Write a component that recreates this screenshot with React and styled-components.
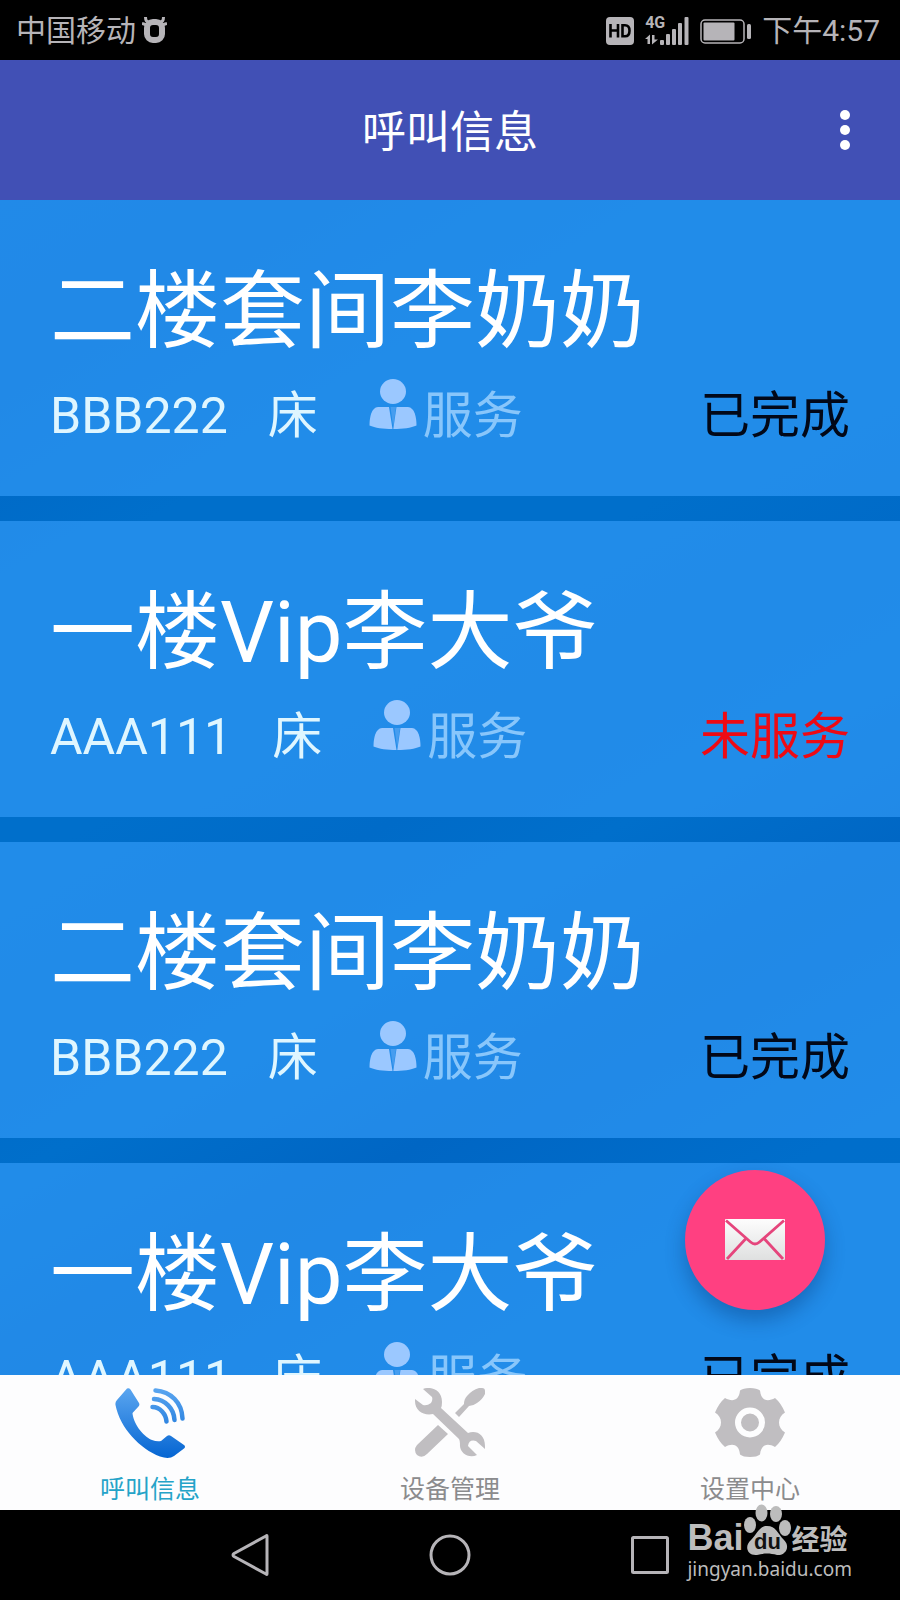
import React from 'react';
import styled, {createGlobalStyle} from 'styled-components';

const GlobalStyle = createGlobalStyle`
  * {
    box-sizing: border-box;
  }

  body {
    margin: 0;
    background: #000;
    font-family: Roboto, 'Noto Sans CJK SC', sans-serif;
  }

  button {
    padding: 0;
    border: 0;
    background: none;
    font-family: inherit;
    cursor: pointer;
  }

  svg {
    display: block;
  }
`;

const Screen = styled.div`
  position: relative;
  display: flex;
  flex-direction: column;
  height: 100vh;
  min-height: 600px;
`;

const StatusBar = styled.div`
  display: flex;
  flex: none;
  align-items: center;
  height: 60px;
  padding: 2px 20px 0 16px;
  background: #000;
  color: #b6b4b8;
  font-size: 30px;
  line-height: 36px;
`;

const Carrier = styled.span`
  margin-right: 6px;
`;

const StatusIcons = styled.div`
  display: flex;
  align-items: center;
  gap: 11px;
  margin-left: auto;
`;

const Header = styled.header`
  position: relative;
  display: flex;
  flex: none;
  align-items: center;
  justify-content: center;
  height: 140px;
  background: #4150b5;
`;

const HeaderTitle = styled.h1`
  margin: 0;
  padding-top: 6px;
  color: #fff;
  font-size: 44px;
  font-weight: 400;
  line-height: 60px;
`;

const MenuButton = styled.button`
  position: absolute;
  top: 0;
  right: 0;
  display: flex;
  flex-direction: column;
  align-items: center;
  justify-content: center;
  gap: 5px;
  width: 110px;
  height: 100%;
`;

const Dot = styled.span`
  width: 10px;
  height: 10px;
  border-radius: 50%;
  background: #fff;
`;

const Main = styled.main`
  position: relative;
  flex: 1;
  min-height: 0;
`;

const List = styled.ul`
  display: flex;
  flex-direction: column;
  gap: 25px;
  height: 100%;
  margin: 0;
  padding: 0;
  overflow-y: auto;
  scrollbar-width: none;
  list-style: none;
  background: linear-gradient(150deg, #0069c8 0%, #0067c5 10%, #006fcb 24%, #006fcb 40%, #006bc8 50%, #006fcb 58%, #0066c4 70%, #006ecb 84%, #006fcb 100%);
`;

const Card = styled.li`
  flex: none;
  height: 296px;
  padding: 57px 50px 0;
  background: rgba(55, 160, 253, .6);
`;

const Name = styled.h2`
  margin: 0;
  color: #fff;
  font-size: 85px;
  font-weight: 400;
  line-height: 110px;
  white-space: nowrap;
`;

const Details = styled.div`
  display: flex;
  align-items: center;
  height: 98px;
  color: #dff6ff;
  font-size: 50px;
  line-height: 60px;
  white-space: nowrap;
`;

const Bed = styled.span`
  margin-left: 40px;
`;

const Service = styled.span`
  display: flex;
  align-items: center;
  gap: 6px;
  margin-left: 51px;
  color: #88c6fb;

  svg {
    margin-bottom: 24px;
  }
`;

const Status = styled.span`
  margin-left: auto;
  color: ${({$done}) => $done ? '#020818' : '#ee0a14'};
`;

const Fab = styled.button`
  position: absolute;
  right: 75px;
  bottom: 65px;
  display: flex;
  align-items: center;
  justify-content: center;
  width: 140px;
  height: 140px;
  border-radius: 50%;
  background: #ff4081;
  box-shadow: 0 10px 20px rgba(0, 30, 80, .3);
`;

const TabBar = styled.nav`
  display: flex;
  flex: none;
  height: 135px;
  background: #fdfdfe;
`;

const Tab = styled.button`
  display: flex;
  flex: 1;
  flex-direction: column;
  align-items: center;
  gap: 14px;
  padding-top: 13px;
  color: ${({$active}) => $active ? '#24a3c8' : '#8b8b8d'};
  font-size: 25px;
  line-height: 36px;
`;

const NavBar = styled.nav`
  position: relative;
  display: flex;
  flex: none;
  justify-content: center;
  height: 90px;
  padding: 0 calc(100% / 6);
  background: #000;
`;

const NavButton = styled.button`
  display: flex;
  flex: 1;
  align-items: center;
  justify-content: center;
`;

const Watermark = styled.div`
  position: absolute;
  right: 48px;
  bottom: 18px;
  color: #bcbcbc;
`;

const Brand = styled.div`
  display: flex;
  align-items: flex-end;
  height: 54px;
  font-family: 'Liberation Sans', 'Noto Sans CJK SC', sans-serif;
  font-size: 36px;
  font-weight: 700;
  line-height: 36px;
`;

const Paw = styled.span`
  position: relative;
  width: 48px;
  height: 54px;
`;

const PawText = styled.span`
  position: absolute;
  bottom: 3px;
  left: 0;
  width: 100%;
  color: #111;
  font-size: 22px;
  line-height: 22px;
  text-align: center;
`;

const BrandSuffix = styled.span`
  font-size: 28px;
  line-height: 30px;
`;

const BrandUrl = styled.div`
  font-family: 'Noto Sans', sans-serif;
  font-size: 19px;
  line-height: 26px;
`;

const BullIcon = () => (
  <svg width="25" height="28" viewBox="0 0 25 28" fill="none" stroke="#b6b4b8">
    <path d="M3.500 0C3.500 3 4 5 7 5M21.500 0C21.500 3 21 5 18 5M0 6.500L5 8M25 6.500L20 8" strokeWidth="3" />
    <rect x="5" y="5" width="15" height="18" rx="6" strokeWidth="6" />
  </svg>
);

const HdIcon = () => (
  <svg width="28" height="28" viewBox="0 0 28 28">
    <rect width="28" height="28" rx="4" fill="#b6b4b8" />
    <path d="M4.500 7V20.500M12 7V20.500M4.500 13.500H12M16.500 8.300V19.200H19C22 19.200 23.500 17 23.500 13.700S22 8.300 19 8.300Z" fill="none" stroke="#000" strokeWidth="2.600" />
  </svg>
);

const SignalText = styled.span`
  position: absolute;
  top: 0;
  left: 0;
  font-family: 'Liberation Sans Narrow', Roboto, sans-serif;
  font-size: 16px;
  font-weight: 700;
  line-height: 12px;
`;

const Signal = styled.span`
  position: relative;
`;

const SignalIcon = () => (
  <Signal>
    <SignalText>4G</SignalText>
    <svg width="44" height="28" viewBox="0 0 44 28" fill="#b6b4b8">
      <path d="M0 22L5 17.500V27H2.500V22ZM7 18H9.500V22.500H13L7 27.500Z" />
      <rect x="15" y="23" width="4" height="5" rx="1" />
      <rect x="21" y="17" width="4" height="11" rx="1" />
      <rect x="27" y="12" width="4" height="16" rx="1" />
      <rect x="33" y="6" width="4" height="22" rx="1" />
      <rect x="39.500" y="0" width="4" height="28" rx="1" />
    </svg>
  </Signal>
);

const BatteryIcon = () => (
  <svg width="51" height="25" viewBox="0 0 51 25">
    <rect x="1" y="1" width="43" height="23" rx="4" fill="none" stroke="#b6b4b8" strokeWidth="1.500" />
    <rect x="3.500" y="3.500" width="31" height="18" rx="1" fill="#b6b4b8" />
    <rect x="47" y="5" width="4" height="15" rx="1.500" fill="#b6b4b8" />
  </svg>
);

const PersonIcon = () => (
  <svg width="48" height="51" viewBox="0 0 48 51" fill="#9bc8ff">
    <ellipse cx="24" cy="12.500" rx="13" ry="12.500" />
    <path d="M9 28H20L23.500 50C14 50 6 49 .5 46.500C.5 38 2.500 28.500 9 28Z" />
    <path d="M39 28H27.500L24.300 50C34 50 42 49 47.500 46.500C47.500 38 45.500 28.500 39 28Z" />
    <path d="M21.500 28H27L24.200 48Z" opacity=".3" />
  </svg>
);

const MailIcon = () => (
  <svg width="60" height="42" viewBox="0 0 60 42">
    <defs>
      <linearGradient id="paper" x1="0" y1="0" x2="0" y2="1">
        <stop offset="0" stopColor="#fdfdfd" />
        <stop offset="1" stopColor="#dfe0e0" />
      </linearGradient>
    </defs>
    <rect width="60" height="41" rx="1" fill="url(#paper)" />
    <path d="M1 1.500L25.500 23Q30 27 34.500 23L59 1.500M2 40L20.500 20M58 40L39.500 20" fill="none" stroke="#e5457c" strokeWidth="2.800" />
  </svg>
);

const CallIcon = () => (
  <svg width="70" height="70" viewBox="0 0 70 70">
    <defs>
      <linearGradient id="call" gradientUnits="userSpaceOnUse" x1="0" y1="0" x2="0" y2="70">
        <stop offset="0" stopColor="#5ba6f0" />
        <stop offset="1" stopColor="#0565d2" />
      </linearGradient>
    </defs>
    <path d="M12 .5Q14 -.5 15.500 1.500L24 15Q25 17 23.500 18.500L17.500 25C18 34 27 48 37 52Q42 54 46 53L52 48Q54 46.500 56 48L69 57Q71 58.500 69 60.500L59 68Q54 71.500 45 68.500C25 61 5 40 .5 17Q0 14 2 12Z" fill="url(#call)" />
    <path d="M37.500 19C45 19 51 26 51.500 33.500M39 11C50 11.500 59 20.500 59.500 32M40.500 2.500C56 3.500 67 15 67.500 30.500" fill="none" stroke="url(#call)" strokeWidth="4.500" strokeLinecap="round" />
  </svg>
);

const ToolsIcon = () => (
  <svg width="70" height="70" viewBox="0 0 70 70" fill="#c0bec1">
    <path d="M40 25L49 16Q49 11 52 8Q57 2 64 0H67Q70 0 70 3V6Q67 12 62 15Q58 18 54 18L44 29Z" />
    <path d="M23 37L33 46L12 66Q7 71 2 67Q-2 62 2 57Z" />
    <path d="M8 1C15 -2 27 1 27 14Q27 18 26 20L53 45C61 42 70 46 70 58V61L61 53Q54 51 53 58L62 67C54 71 44 65 45 56Q45 53 44 51L18 26C9 28 0 23 0 13V11L8 17Q12 18 16 15Q18 12 17 9Z" />
  </svg>
);

const GearIcon = () => (
  <svg width="70" height="70" viewBox="0 0 70 70">
    <path d="M25 2.500Q28 0 35 0T45 2.500C46 13 53 14 60 10Q66 15 70 24.500C62 29 62 40 70 44.500Q66 54 60 59C53 55 46 56 45 66.500Q42 69 35 69T25 66.500C24 56 17 55 10 59Q4 54 0 44.500C8 40 8 29 0 24.500Q4 15 10 10C17 14 24 13 25 2.500Z" fill="#c0bec1" />
    <circle cx="35" cy="34.500" r="12" fill="none" stroke="#fdfdfe" strokeWidth="6" />
  </svg>
);

const NavIcon = ({children}) => (
  <svg width="44" height="44" viewBox="0 0 44 44" fill="none" stroke="#b6b4b8" strokeWidth="3" strokeLinejoin="round">
    {children}
  </svg>
);

const PawIcon = () => (
  <svg width="48" height="54" viewBox="0 0 48 54" fill="#bcbcbc">
    <ellipse cx="7" cy="23" rx="6" ry="8" />
    <ellipse cx="18.500" cy="11" rx="6" ry="8.500" />
    <ellipse cx="33" cy="12" rx="6" ry="8" />
    <ellipse cx="42" cy="26" rx="6" ry="8" />
    <path d="M24 24C33 24 35 32 41 38C48 45 42 54 34 53C27 51 21 51 14 53C4 54 1 44 8 38C14 32 16 24 24 24Z" />
  </svg>
);

const calls = [
  {id: 1, name: '二楼套间李奶奶', device: 'BBB222', done: true, status: '已完成'},
  {id: 2, name: '一楼Vip李大爷', device: 'AAA111', done: false, status: '未服务'},
  {id: 3, name: '二楼套间李奶奶', device: 'BBB222', done: true, status: '已完成'},
  {id: 4, name: '一楼Vip李大爷', device: 'AAA111', done: true, status: '已完成'},
];

const tabs = [
  {label: '呼叫信息', icon: <CallIcon />, active: true},
  {label: '设备管理', icon: <ToolsIcon />},
  {label: '设置中心', icon: <GearIcon />},
];

const CallCard = ({call}) => (
  <Card>
    <Name>{call.name}</Name>
    <Details>
      <span>{call.device}</span>
      <Bed>床</Bed>
      <Service><PersonIcon />服务</Service>
      <Status $done={call.done}>{call.status}</Status>
    </Details>
  </Card>
);

const App = () => (
  <Screen>
    <GlobalStyle />
    <StatusBar>
      <Carrier>中国移动</Carrier>
      <BullIcon />
      <StatusIcons>
        <HdIcon />
        <SignalIcon />
        <BatteryIcon />
        <span>下午4:57</span>
      </StatusIcons>
    </StatusBar>
    <Header>
      <HeaderTitle>呼叫信息</HeaderTitle>
      <MenuButton aria-label="更多">
        <Dot />
        <Dot />
        <Dot />
      </MenuButton>
    </Header>
    <Main>
      <List>
        {calls.map(call => <CallCard key={call.id} call={call} />)}
      </List>
      <Fab aria-label="消息"><MailIcon /></Fab>
    </Main>
    <TabBar>
      {tabs.map(({label, icon, active}) => (
        <Tab key={label} $active={active}>
          {icon}
          {label}
        </Tab>
      ))}
    </TabBar>
    <NavBar>
      <NavButton aria-label="返回">
        <NavIcon><path d="M39 3V41Q39 42 38 41L6 23.500Q4 22 6 20.500L38 3Q39 2 39 3Z" /></NavIcon>
      </NavButton>
      <NavButton aria-label="主页">
        <NavIcon><circle cx="22" cy="22" r="19" /></NavIcon>
      </NavButton>
      <NavButton aria-label="最近任务">
        <NavIcon><rect x="4.500" y="4.500" width="35" height="35" rx="1" /></NavIcon>
      </NavButton>
      <Watermark>
        <Brand>
          Bai
          <Paw>
            <PawIcon />
            <PawText>du</PawText>
          </Paw>
          <BrandSuffix>经验</BrandSuffix>
        </Brand>
        <BrandUrl>jingyan.baidu.com</BrandUrl>
      </Watermark>
    </NavBar>
  </Screen>
);

export default App;
